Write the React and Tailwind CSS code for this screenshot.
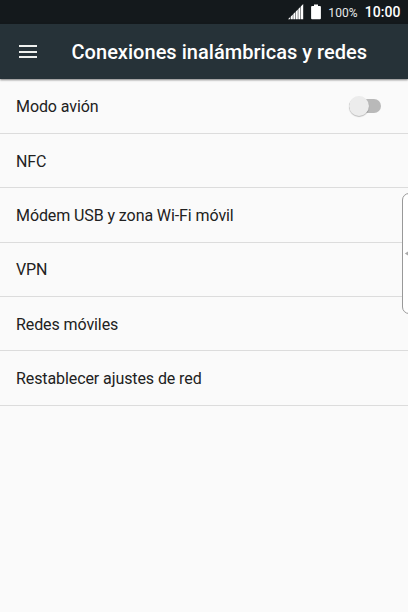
const items = [
  { label: 'Modo avión', toggle: true },
  { label: 'NFC' },
  { label: 'Módem USB y zona Wi-Fi móvil' },
  { label: 'VPN' },
  { label: 'Redes móviles' },
  { label: 'Restablecer ajustes de red' },
];

function StatusBar() {
  return (
    <div className="flex h-6 shrink-0 items-center justify-end bg-[#14191c] pr-[7.5px] text-white">
      <svg className="h-4 w-4" viewBox="0 0 16 16" fill="currentColor">
        <path d="M0 15.2L2.2 13v2.2zM2.8 12.4l2-2v4.8h-2zM5.3 9.9l2-2v7.3h-2zM7.8 7.4l2-2v9.8h-2zM10.3 4.9l2-2v12.3h-2zM12.8 2.4L15.2 0v15.2h-2.4z" />
      </svg>
      <svg className="ml-[7px] h-4 w-[10px]" viewBox="0 0 10 16" fill="currentColor">
        <path d="M1 2h2V.5h4V2h2q.9 0 .9.9v11.4q0 .9-.9.9H1q-.9 0-.9-.9V2.9Q.1 2 1 2z" />
      </svg>
      <span className="ml-[7px] pt-px text-[12px] tracking-[0.1px] text-[#e8eaeb]">100%</span>
      <span className="ml-[7px] pt-px text-[14px] font-medium tracking-[0.05px]">10:00</span>
    </div>
  );
}

function AppBar() {
  return (
    <header className="z-10 flex h-[55px] shrink-0 items-center bg-[#263238] pl-[19px] text-white shadow-[0_1px_2px_rgba(0,0,0,0.5)]">
      <button type="button" aria-label="Menú" className="flex w-[18px] flex-col gap-[3.5px]">
        <span className="h-0.5 bg-[#eef0ee]" />
        <span className="h-0.5 bg-[#eef0ee]" />
        <span className="h-0.5 bg-[#eef0ee]" />
      </button>
      <h1 className="ml-[34.5px] mt-px whitespace-nowrap text-[20px] font-medium tracking-[0.03px]">Conexiones inalámbricas y redes</h1>
    </header>
  );
}

export default function App() {
  return (
    <div className="relative flex h-[612px] w-[408px] flex-col overflow-hidden bg-[#fafafa] font-['Roboto',sans-serif] text-[#212121]">
      <StatusBar />
      <AppBar />
      <ul className="pt-[0.4px]">
        {items.map((item) => (
          <li key={item.label} className="flex h-[54.4px] items-center justify-between border-b border-[#dcdcdc] pl-4 pr-[27px] text-[16px] tracking-[-0.09px]">
            <span className="pt-[2.4px]">{item.label}</span>
            {item.toggle && (
              <span className="flex h-3.5 w-8 items-center rounded-full bg-[#b9b9b9]">
                <span className="h-5 w-5 shrink-0 rounded-full bg-[#ececec] shadow-[0_1px_1px_rgba(0,0,0,0.25)]" />
              </span>
            )}
          </li>
        ))}
      </ul>
      <div className="absolute -right-2 top-[193px] h-[121px] w-3.5 rounded-lg border border-[#999] bg-white">
        <svg className="absolute left-px top-[57px] h-[5px] w-1" viewBox="0 0 4 5" fill="#aaa">
          <path d="M4 .5v4L.8 2.5z" />
        </svg>
      </div>
    </div>
  );
}
